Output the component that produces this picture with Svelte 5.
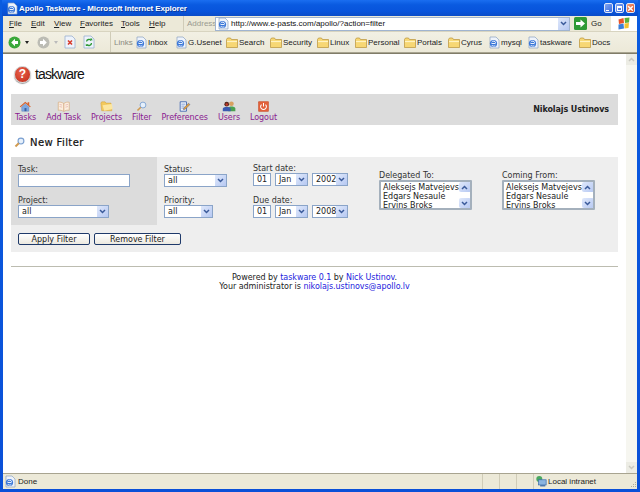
<script lang="ts">
  const menus = [
    { label: "File", w: 22 }, { label: "Edit", w: 23 }, { label: "View", w: 26 },
    { label: "Favorites", w: 41 }, { label: "Tools", w: 28 }, { label: "Help", w: 34 },
  ];
  const links = [
    { label: "Inbox", icon: "ie", w: 40 }, { label: "G.Usenet", icon: "ie", w: 51 },
    { label: "Search", icon: "folder", w: 44 }, { label: "Security", icon: "folder", w: 47 },
    { label: "Linux", icon: "folder", w: 38 }, { label: "Personal", icon: "folder", w: 49 },
    { label: "Portals", icon: "folder", w: 44 }, { label: "Cyrus", icon: "folder", w: 40 },
    { label: "mysql", icon: "ie", w: 39 }, { label: "taskware", icon: "ie", w: 52 },
    { label: "Docs", icon: "folder", w: 40 },
  ];
  const nav = [
    { label: "Tasks", icon: "home" }, { label: "Add Task", icon: "book" },
    { label: "Projects", icon: "navfolder" }, { label: "Filter", icon: "lens" },
    { label: "Preferences", icon: "prefs" }, { label: "Users", icon: "users" },
    { label: "Logout", icon: "power" },
  ];
  const people = ["Aleksejs Matvejevs", "Edgars Nesaule", "Ervins Broks"];
</script>

{#snippet chevron()}
  <span class="chev"><svg width="7" height="5" viewBox="0 0 7 5"><path d="M1 1l2.5 2.5L6 1" fill="none" stroke="#3a5a9a" stroke-width="1.5"/></svg></span>
{/snippet}

{#snippet sel(text, cls)}
  <div class="sel {cls}"><span>{text}</span>{@render chevron()}</div>
{/snippet}

{#snippet listbox()}
  <div class="listbox">
    <div class="opts">{#each people as p}<div>{p}</div>{/each}</div>
    <div class="lbar">
      <span class="chev"><svg width="7" height="5" viewBox="0 0 7 5"><path d="M1 4l2.5-2.5L6 4" fill="none" stroke="#3a5a9a" stroke-width="1.5"/></svg></span>
      <span class="chev"><svg width="7" height="5" viewBox="0 0 7 5"><path d="M1 1l2.5 2.5L6 1" fill="none" stroke="#3a5a9a" stroke-width="1.5"/></svg></span>
    </div>
  </div>
{/snippet}

{#snippet icon(kind)}
  {#if kind === "ie"}
    <svg width="12" height="13" viewBox="0 0 12 13"><path d="M2 1h6l3 3v8H2z" fill="#eef3fb" stroke="#8aa0c0" stroke-width=".7"/><circle cx="5.5" cy="7.5" r="3.6" fill="#3b78d8"/><path d="M3.500 7.500h4M3.700 6.200a2.200 2.200 0 0 1 4 .6M3.700 9a2.200 2.200 0 0 0 3.600.3" stroke="#fff" stroke-width=".9" fill="none"/></svg>
  {:else if kind === "folder"}
    <svg width="12" height="11" viewBox="0 0 12 11"><path d="M.5 2.500l1-1.500h3l1 1.500h6v8H.5z" fill="#f7d774" stroke="#b8923a" stroke-width=".7"/><path d="M1 4.500h10" stroke="#fff3c4" stroke-width="1.200"/></svg>
  {:else if kind === "home"}
    <svg width="16" height="14" viewBox="0 0 16 14"><path d="M1 7l7-6 3 2.500V1.500h2v4L15 7l-1 1-6-5-6 5z" fill="#d8602a"/><path d="M3.500 7.500L8 3.800l4.500 3.700V13h-9z" fill="#7ea8e0" stroke="#4a6fb0" stroke-width=".5"/><path d="M7 9h2.500v4H7z" fill="#3a5fa0"/></svg>
  {:else if kind === "book"}
    <svg width="16" height="13" viewBox="0 0 16 13"><path d="M8 3C6 1.500 3.500 1 1.500 1.500V11C3.500 10.500 6 11 8 12.500 10 11 12.500 10.500 14.500 11V1.500C12.500 1 10 1.500 8 3z" fill="#fbeede" stroke="#d0a070" stroke-width=".7"/><path d="M8 3v9" stroke="#c08050" stroke-width=".7"/><path d="M3 4l3 .8M3 6.500l3 .8M10 4.800l3-.8M10 7.300l3-.8" stroke="#e0a0a0" stroke-width=".7"/></svg>
  {:else if kind === "navfolder"}
    <svg width="16" height="13" viewBox="0 0 16 13"><path d="M1 2.500l1-1.500h4l1 1.500h6l1 9H2z" fill="#f3c95c" stroke="#cf9f3c" stroke-width=".6"/><path d="M3 5l11-1.500 1 6-10 2z" fill="#fce6a0"/></svg>
  {:else if kind === "lens"}
    <svg width="15" height="15" viewBox="0 0 15 15"><circle cx="9.500" cy="5.500" r="4" fill="#e6f0fb" stroke="#7a9fd0" stroke-width="1.200"/><path d="M6.500 8.500L2 13" stroke="#d09a50" stroke-width="2.200"/></svg>
  {:else if kind === "prefs"}
    <svg width="15" height="14" viewBox="0 0 15 14"><path d="M1.500 1h8v12h-8z" fill="#f2f6fc" stroke="#2a55a8" stroke-width="1"/><path d="M3 4h5M3 6.500h4M3 9h5" stroke="#6a8ccc"/><path d="M6 9l6-6 2 1.500-6 6-2.500.5z" fill="#e0a040" stroke="#3a4a80" stroke-width=".5"/></svg>
  {:else if kind === "users"}
    <svg width="18" height="14" viewBox="0 0 18 14"><circle cx="12" cy="3.500" r="3" fill="#d8a060"/><path d="M8 13V9.500C8 7.500 10 7 12 7s5 .5 5 2.500V13z" fill="#4aa050"/><circle cx="6" cy="4" r="3" fill="#5a2a20"/><path d="M1 13V10c0-2 2-2.500 5-2.500S11 8 11 10v3z" fill="#3a5ab0"/><circle cx="6" cy="4.500" r="1.500" fill="#c83a2a"/></svg>
  {:else if kind === "power"}
    <svg width="14" height="14" viewBox="0 0 14 14"><rect x=".5" y=".5" width="13" height="13" rx="1" fill="#e2603a" stroke="#c04a28" stroke-width=".6"/><path d="M4.500 4.500a3.700 3.700 0 1 0 5 0" fill="none" stroke="#fff" stroke-width="1.300"/><path d="M7 2.500v4.500" stroke="#fff" stroke-width="1.300"/></svg>
  {/if}
{/snippet}

<div class="window">
  <div class="titlebar">
    {@render icon("ie")}
    <span class="title">Apollo Taskware - Microsoft Internet Explorer</span>
    <div class="winbtns">
      <span class="wb"><i class="min"></i></span>
      <span class="wb"><i class="max"></i></span>
      <span class="wb close">
        <svg width="7" height="7" viewBox="0 0 9 9"><path d="M1.500 1.500l6 6M7.500 1.500l-6 6" stroke="#fff" stroke-width="1.900"/></svg>
      </span>
    </div>
  </div>

  <div class="chrome">
    <div class="menubar">
      <div class="menus">
        {#each menus as m}
          <span class="menu" style="width: {m.w}px"><u>{m.label[0]}</u>{m.label.slice(1)}</span>
        {/each}
      </div>
      <div class="address">
        <span class="addr-label">Address</span>
        <div class="url">
          {@render icon("ie")}
          <span class="url-text">http://www.e-pasts.com/apollo/?action=filter</span>
          <span class="url-drop">{@render chevron()}</span>
        </div>
        <span class="go">
          <svg width="13" height="13" viewBox="0 0 13 13"><rect width="13" height="13" rx="1.500" fill="#2f9a35"/><path d="M6.500 2.500L11 6.500l-4.500 4V8H2V5h4.500z" fill="#fff"/></svg>
          <span>Go</span>
        </span>
      </div>
      <div class="flag">
        <svg width="14" height="13" viewBox="0 0 14 13"><path d="M1.500 2.500l5-1.500.5 5-5 1z" fill="#e8552a"/><path d="M7.500 1l5-.5-.5 5-4 .5z" fill="#5bb03a"/><path d="M1.500 7.500l5-1 .5 5-5.500 1z" fill="#3a7fd8"/><path d="M7.500 6.500l4.500-.5-.5 5-4 .5z" fill="#f3c22f"/></svg>
      </div>
    </div>

    <div class="toolbar">
      <div class="nav-btns">
        <svg width="13" height="13" viewBox="0 0 13 13"><circle cx="6.500" cy="6.500" r="6" fill="#3aa83a"/><path d="M7 2.800L3.200 6.500 7 10.200V8h3V5H7z" fill="#fff"/></svg>
        <span class="arrow"></span>
        <svg width="13" height="13" viewBox="0 0 13 13"><circle cx="6.500" cy="6.500" r="6" fill="#bcbcb4"/><path d="M6 2.800L9.800 6.500 6 10.200V8H3V5h3z" fill="#fff"/></svg>
        <span class="arrow dim"></span>
        <svg width="12" height="14" viewBox="0 0 12 14"><path d="M1 1h7l3 3v9H1z" fill="#eef3fb" stroke="#9ab0d0" stroke-width=".8"/><path d="M4 5.500l4 4M8 5.500l-4 4" stroke="#d83a2a" stroke-width="1.600"/></svg>
        <svg class="refresh" width="12" height="14" viewBox="0 0 12 14"><path d="M1 1h7l3 3v9H1z" fill="#eef3fb" stroke="#9ab0d0" stroke-width=".8"/><path d="M3.500 6.500a2.500 2.500 0 0 1 4.500-1M8.500 8a2.500 2.500 0 0 1-4.500 1.500" stroke="#2f9a35" stroke-width="1.300" fill="none"/><path d="M7 3.500h2.200v2.500zM5 11H2.800V8.500z" fill="#2f9a35"/></svg>
      </div>
      <span class="links-label">Links</span>
      <div class="links">
        {#each links as l}
          <span class="link" style="width: {l.w}px"><span class="link-icon">{@render icon(l.icon)}</span><span>{l.label}</span></span>
        {/each}
      </div>
    </div>
  </div>

  <div class="viewport">
    <main class="page">
      <div class="logo">
        <span class="logo-mark">?</span>
        <span class="logo-text">taskware</span>
      </div>

      <nav class="navbar">
        <div class="nav-items">
          {#each nav as n}
            <div class="nav-item">
              <span class="nav-icon">{@render icon(n.icon)}</span>
              <span>{n.label}</span>
            </div>
          {/each}
        </div>
        <span class="user">Nikolajs Ustinovs</span>
      </nav>

      <h1 class="heading">
        <svg width="11" height="11" viewBox="0 0 15 15"><circle cx="9.500" cy="5.500" r="4" fill="#e6f0fb" stroke="#7a9fd0" stroke-width="1.500"/><path d="M6.500 8.500L2 13" stroke="#d09a50" stroke-width="2.600"/></svg>
        <span>New Filter</span>
      </h1>

      <section class="filter">
        <div class="cell-main">
          <label class="field">Task:<span class="textbox wide"></span></label>
          <label class="field">Project:{@render sel("all", "w91")}</label>
        </div>
        <div class="cell-status">
          <label class="field">Status:{@render sel("all", "w63")}</label>
          <label class="field">Priority:{@render sel("all", "w49")}</label>
        </div>
        <div class="cell-dates">
          <div class="field">Start date:
            <div class="date-row"><span class="textbox day">01</span>{@render sel("Jan", "w33")}{@render sel("2002", "w36")}</div>
          </div>
          <div class="field">Due date:
            <div class="date-row"><span class="textbox day">01</span>{@render sel("Jan", "w33")}{@render sel("2008", "w36")}</div>
          </div>
        </div>
        <div class="cell-list"><div class="field">Delegated To:{@render listbox()}</div></div>
        <div class="cell-list"><div class="field">Coming From:{@render listbox()}</div></div>
        <div class="actions">
          <button class="apply">Apply Filter</button>
          <button class="remove">Remove Filter</button>
        </div>
      </section>

      <hr />

      <footer>
        <div>Powered by <a href="#top">taskware 0.1</a> by <a href="#top">Nick Ustinov</a>.</div>
        <div>Your administrator is <a href="#top">nikolajs.ustinovs@apollo.lv</a></div>
      </footer>
    </main>
    <div class="scrollbar">
      <span class="sb-btn"><svg width="7" height="5" viewBox="0 0 7 5"><path d="M1 4l2.500-2.500L6 4" fill="none" stroke="#c8c8c0" stroke-width="1.500"/></svg></span>
      <span class="sb-btn"><svg width="7" height="5" viewBox="0 0 7 5"><path d="M1 1l2.500 2.500L6 1" fill="none" stroke="#c8c8c0" stroke-width="1.500"/></svg></span>
    </div>
  </div>

  <div class="statusbar">
    <div class="st-done">{@render icon("ie")}<span>Done</span></div>
    <div class="st-cell"></div>
    <div class="st-cell"></div>
    <div class="st-cell"></div>
    <div class="st-zone">
      <svg width="12" height="13" viewBox="0 0 14 14"><circle cx="5" cy="4" r="3.500" fill="#4aa860"/><rect x="4" y="5" width="9" height="6" fill="#8ab4e0" stroke="#3a6aa8" stroke-width=".8"/><path d="M6 12h6" stroke="#3a6aa8" stroke-width="1.500"/></svg>
      <span>Local intranet</span>
    </div>
    <svg class="grip" width="7" height="7" viewBox="0 0 7 7"><path d="M5 1h1v1H5zM3 3h1v1H3zM5 3h1v1H5zM1 5h1v1H1zM3 5h1v1H3zM5 5h1v1H5z" fill="#b0ac98"/></svg>
  </div>
</div>

<style>
  :global(body) {
    margin: 0;
    background: #0a4fd8;
  }

  .window {
    width: 640px;
    height: 492px;
    display: flex;
    flex-direction: column;
    box-sizing: border-box;
    overflow: hidden;
    background: linear-gradient(#0a5ce0, #0a50d8);
    padding: 0 3px 3px 3px;
    font-family: "DejaVu Sans", sans-serif;
  }

  .titlebar {
    height: 16px;
    flex: none;
    display: flex;
    align-items: center;
    gap: 1px;
    margin: 0 -1px;
    padding-left: 4px;
    background: linear-gradient(#1a6ef0 0, #0a5ae0 30%, #0854dc 70%, #0a4cc8 100%);
  }

  .title {
    color: #fff;
    font: bold 8px "Liberation Sans", sans-serif;
    letter-spacing: -0.1px;
    text-shadow: 1px 1px 0 #0a3a9a;
  }

  .winbtns {
    margin-left: auto;
    margin-right: 3px;
    display: flex;
    gap: 2px;
  }

  .wb {
    width: 9px;
    height: 10px;
    border: 1px solid #dfe8fa;
    box-sizing: border-box;
    border-radius: 2px;
    background: linear-gradient(135deg, #7fa4f0, #3a6ae0);
    display: flex;
    align-items: center;
    justify-content: center;
  }

  .wb.close {
    background: linear-gradient(135deg, #f0a080, #d8481c);
  }

  .wb .min {
    width: 3px;
    height: 1px;
    background: #fff;
    margin: 4px 2px 0 0;
  }

  .wb .max {
    width: 5px;
    height: 5px;
    border: 1px solid #fff;
    border-top-width: 2px;
    box-sizing: border-box;
  }

  .chrome {
    background: #ece9d8;
    flex: none;
    font: 8px "Liberation Sans", sans-serif;
    color: #222;
  }

  .menubar {
    height: 15px;
    display: flex;
    align-items: center;
    border-bottom: 1px solid #d8d4c0;
  }

  .menus {
    display: flex;
    width: 180px;
    padding-left: 6px;
    box-sizing: border-box;
    flex: none;
  }

  .menu u {
    text-decoration-thickness: 1px;
  }

  .address {
    flex: 1;
    display: flex;
    align-items: center;
    height: 100%;
    border-left: 1px solid #d0ccb8;
    padding-left: 3px;
  }

  .addr-label {
    color: #9a9a90;
    width: 28px;
    flex: none;
  }

  .url {
    width: 355px;
    height: 14px;
    box-sizing: border-box;
    flex: none;
    background: #fff;
    border: 1px solid #a0b4d0;
    display: flex;
    align-items: center;
    gap: 2px;
    padding-left: 1px;
  }

  .url svg {
    flex: none;
  }

  .url-text {
    flex: 1;
    color: #111;
  }

  .url-drop {
    display: flex;
    height: 12px;
  }

  .go {
    display: flex;
    align-items: center;
    gap: 4px;
    margin-left: 4px;
  }

  .flag {
    width: 26px;
    height: 100%;
    background: #fff;
    flex: none;
    display: flex;
    align-items: center;
    justify-content: center;
  }

  .toolbar {
    height: 21px;
    display: flex;
    align-items: center;
    box-sizing: border-box;
    border-bottom: 1px solid #a8a490;
    background: linear-gradient(#f2f0e4, #ece9d8);
  }

  .nav-btns {
    display: flex;
    align-items: center;
    width: 108px;
    flex: none;
    padding-left: 5px;
    box-sizing: border-box;
    border-right: 1px solid #d0ccb8;
    height: 100%;
  }

  .arrow {
    width: 0;
    height: 0;
    border: 2px solid transparent;
    border-top: 3px solid #222;
    border-bottom: 0;
    margin: 0 8px 0 4px;
  }

  .arrow.dim {
    border-top-color: #bbb;
    margin-right: 6px;
  }

  .refresh {
    margin-left: 7px;
  }

  .links-label {
    color: #8a8a80;
    width: 21px;
    flex: none;
    margin-left: 3px;
  }

  .links {
    display: flex;
    align-items: center;
  }

  .link {
    display: flex;
    align-items: center;
    flex: none;
    white-space: nowrap;
  }

  .link-icon {
    width: 13px;
    flex: none;
    display: flex;
  }

  .viewport {
    flex: 1;
    display: flex;
    min-height: 0;
    background: #fff;
    border-top: 1px solid #807c68;
  }

  .page {
    flex: 1;
    padding: 0 8px 0 8px;
    min-width: 0;
    font-size: 8px;
    color: #222;
  }

  .logo {
    height: 40px;
    display: flex;
    align-items: center;
    gap: 4px;
    padding-left: 3px;
    box-sizing: border-box;
  }

  .logo-mark {
    width: 15px;
    height: 15px;
    border-radius: 50%;
    background: radial-gradient(circle at 40% 35%, #e8604a, #c02a18);
    border: 1px solid #ccc;
    box-shadow: 0 1px 1px #999;
    color: #fff;
    font: bold 12px/15px "Liberation Sans", sans-serif;
    text-align: center;
  }

  .logo-text {
    font: 14px "Liberation Sans", sans-serif;
    color: #111;
    letter-spacing: -0.9px;
  }

  .navbar {
    height: 31px;
    background: #dcdcdc;
    display: flex;
    align-items: center;
    justify-content: space-between;
    padding: 0 9px 0 4px;
  }

  .nav-items {
    display: flex;
    gap: 10px;
    padding-top: 5px;
  }

  .nav-item {
    display: flex;
    flex-direction: column;
    align-items: center;
    color: #8a1a90;
    flex: none;
    white-space: nowrap;
    line-height: 10px;
    letter-spacing: -0.06px;
  }

  .nav-icon {
    height: 12px;
    display: block;
  }

  .nav-icon :global(svg) {
    height: 11px;
    width: auto;
    display: block;
  }

  .user {
    font-weight: bold;
    color: #222;
    letter-spacing: -0.1px;
  }

  .heading {
    height: 32px;
    margin: 0;
    box-sizing: border-box;
    padding: 2px 0 0 3px;
    display: flex;
    align-items: center;
    gap: 5px;
    font-size: 10px;
    font-weight: normal;
    letter-spacing: .4px;
    color: #111;
    -webkit-text-stroke: .2px #111;
  }

  .filter {
    display: grid;
    grid-template-columns: 146px 96px 126px 123px 1fr;
    grid-template-rows: 68px 27px;
    background: #eee;
  }

  .cell-main {
    background: #dcdcdc;
    padding: 8px 0 0 7px;
    display: flex;
    flex-direction: column;
    gap: 9px;
  }

  .cell-status {
    padding: 8px 0 0 7px;
    display: flex;
    flex-direction: column;
    gap: 9px;
  }

  .cell-dates {
    padding: 7px 0 0 0;
    display: flex;
    flex-direction: column;
    gap: 10px;
  }

  .cell-list {
    padding: 14px 0 0 0;
  }

  .field {
    display: flex;
    flex-direction: column;
    line-height: 9px;
    color: #333;
  }

  .textbox {
    display: block;
    height: 13px;
    background: #fff;
    border: 1px solid #8aa4c8;
    box-sizing: border-box;
    line-height: 11px;
    padding-left: 3px;
    color: #222;
  }

  .wide {
    width: 112px;
  }

  .day {
    width: 18px;
  }

  .date-row {
    display: flex;
    gap: 4px;
  }

  .sel {
    height: 13px;
    background: #fff;
    border: 1px solid #8aa4c8;
    box-sizing: border-box;
    display: flex;
    align-items: stretch;
    justify-content: space-between;
    line-height: 11px;
    padding-left: 3px;
    color: #222;
  }

  .w91 { width: 91px; }
  .w63 { width: 63px; }
  .w49 { width: 49px; }
  .w33 { width: 33px; }
  .w36 { width: 36px; }

  .chev {
    width: 11px;
    background: linear-gradient(135deg, #dfe8fb, #b6c8f2);
    display: flex;
    align-items: center;
    justify-content: center;
    flex: none;
  }

  .listbox {
    width: 93px;
    height: 30px;
    border: 2px solid #a4b0bc;
    border-radius: 1px;
    box-sizing: border-box;
    background: #fff;
    display: flex;
    justify-content: space-between;
    overflow: hidden;
  }

  .opts {
    line-height: 9px;
    padding: 1px 0 0 2px;
    white-space: nowrap;
    color: #222;
  }

  .lbar {
    width: 12px;
    flex: none;
    background: #fff;
    display: flex;
    flex-direction: column;
    justify-content: space-between;
  }

  .lbar .chev {
    width: 12px;
    height: 10px;
    border-radius: 2px;
  }

  .actions {
    grid-column: 1 / -1;
    display: flex;
    gap: 4px;
    padding: 8px 0 0 7px;
    align-items: flex-start;
  }

  button {
    height: 12px;
    padding: 1px 0 0 0;
    border: 1px solid #1f3a6a;
    border-radius: 2px;
    background: linear-gradient(#fff, #ece9e0);
    font: 8px "DejaVu Sans", sans-serif;
    color: #222;
    line-height: 9px;
  }

  .apply {
    width: 72px;
  }

  .remove {
    width: 87px;
  }

  hr {
    margin: 14px 0 0 0;
    border: 0;
    border-top: 1px solid #bcbcb0;
  }

  footer {
    text-align: center;
    margin-top: 6px;
    line-height: 9px;
    letter-spacing: -0.05px;
    color: #222;
  }

  a {
    color: #2222dd;
    text-decoration: none;
  }

  .scrollbar {
    width: 11px;
    flex: none;
    background: #f6f6f0;
    display: flex;
    flex-direction: column;
    justify-content: space-between;
  }

  .sb-btn {
    height: 11px;
    background: #ecece4;
    display: flex;
    align-items: center;
    justify-content: center;
  }

  .statusbar {
    height: 15px;
    flex: none;
    background: #ece9d8;
    border-top: 1px solid #a8a490;
    display: flex;
    align-items: center;
    font: 8px "Liberation Sans", sans-serif;
    color: #222;
  }

  .st-done {
    width: 479px;
    flex: none;
    display: flex;
    align-items: center;
    gap: 2px;
    padding-left: 1px;
    box-sizing: border-box;
  }

  .st-cell {
    width: 17px;
    height: 100%;
    border-left: 1px solid #d0ccb8;
    box-sizing: border-box;
    flex: none;
  }

  .st-zone {
    display: flex;
    align-items: center;
    gap: 1px;
    border-left: 1px solid #d0ccb8;
    height: 100%;
    padding-left: 1px;
  }

  .grip {
    margin-left: auto;
    margin-top: 6px;
  }
</style>
